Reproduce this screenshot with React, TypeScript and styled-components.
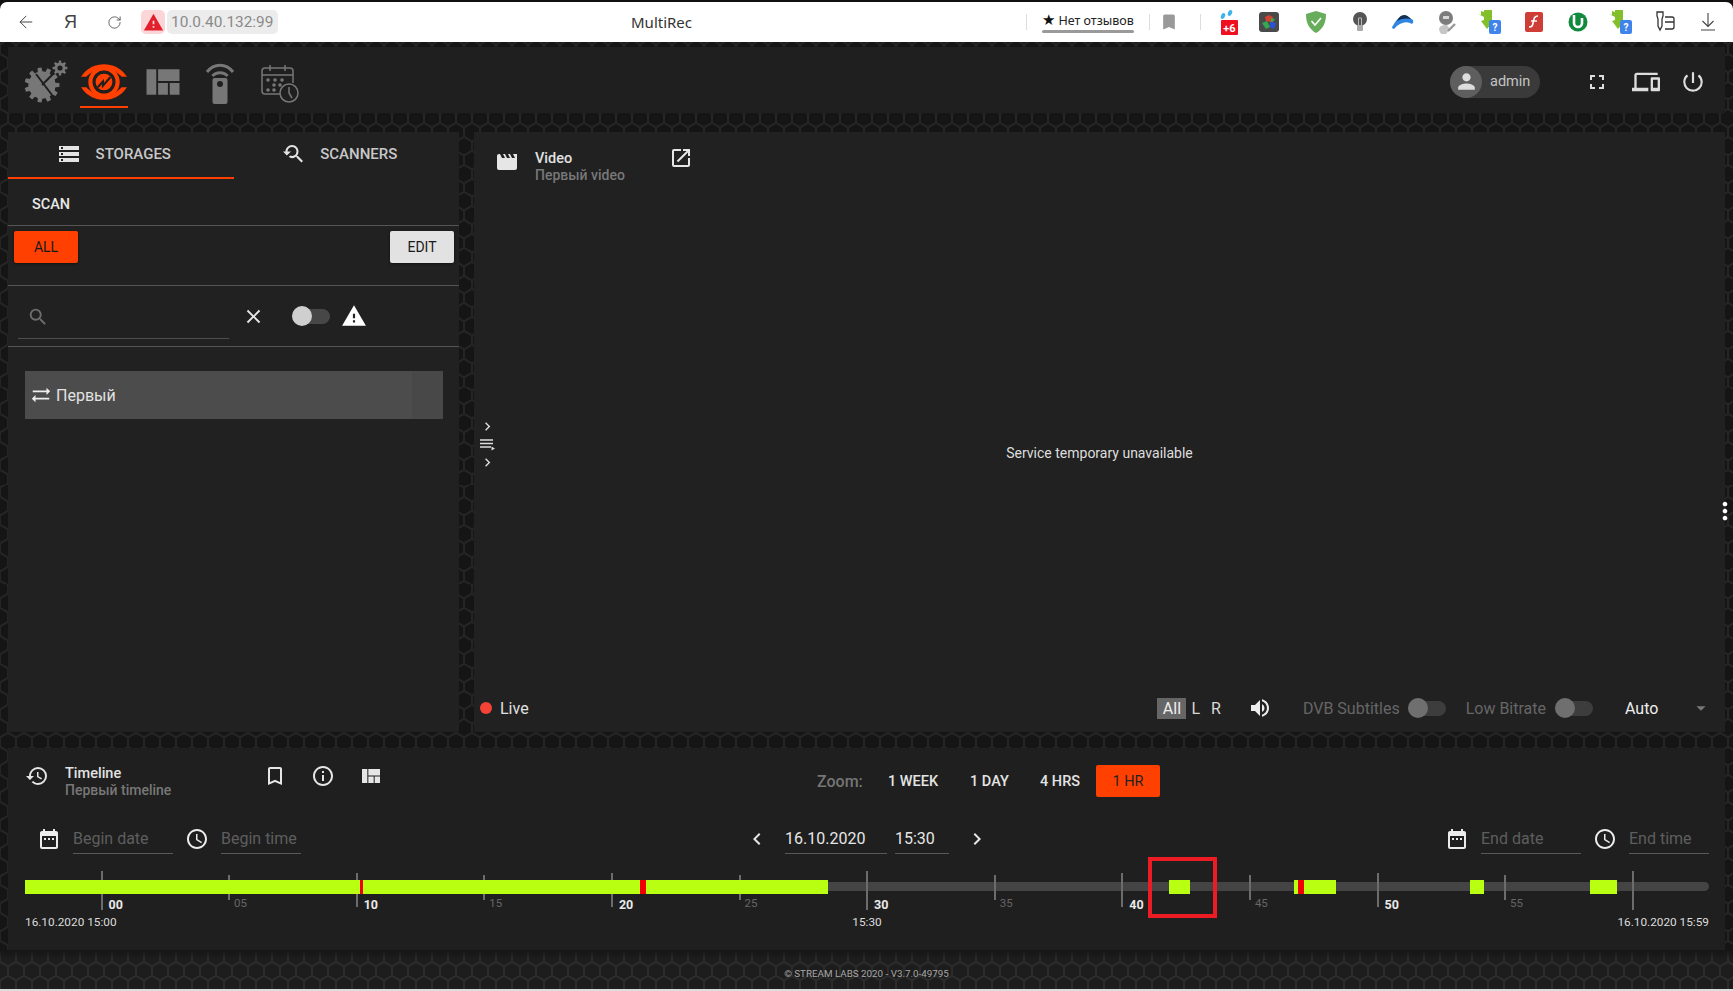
import React from 'react';
import styled, { createGlobalStyle } from 'styled-components';
import { ArrowLeft, RotateCw } from 'lucide-react';
import {
  MdAccessTime,
  MdArrowDropDown,
  MdBookmark,
  MdBookmarkBorder,
  MdChevronLeft,
  MdChevronRight,
  MdClose,
  MdDateRange,
  MdDevices,
  MdFullscreen,
  MdHistory,
  MdInfoOutline,
  MdMoreVert,
  MdMovie,
  MdOpenInNew,
  MdPerson,
  MdPowerSettingsNew,
  MdSearch,
  MdStorage,
  MdSyncAlt,
  MdViewQuilt,
  MdVolumeUp,
  MdWarning,
  MdYoutubeSearchedFor,
} from 'react-icons/md';

const ORANGE = '#ff4000';
const LIME = '#b8ff12';

const hexPoints = (cx: number, cy: number, r: number) =>
  [0, 1, 2, 3, 4, 5]
    .map((i) => {
      const a = (Math.PI / 3) * i + Math.PI / 6;
      return `${(cx + r * Math.cos(a)).toFixed(2)},${(cy + r * Math.sin(a)).toFixed(2)}`;
    })
    .join(' ');

const hexTile = (line: string, fill: string) => {
  const cells = [
    [8, 7],
    [0, 20.86],
    [16, 20.86],
    [8, 34.72],
    [0, -6.86],
    [16, -6.86],
  ]
    .map(([x, y]) => `<polygon points="${hexPoints(x, y, 8.1)}" fill="${fill}"/>`)
    .join('');
  const svg = `<svg xmlns="http://www.w3.org/2000/svg" width="16" height="27.72"><rect width="16" height="27.72" fill="${line}"/>${cells}</svg>`;
  return `url("data:image/svg+xml,${encodeURIComponent(svg)}")`;
};

const gearPath = (cx: number, cy: number, r: number, teeth: number, depth: number) => {
  const pts: string[] = [];
  for (let i = 0; i < teeth; i++) {
    const step = (Math.PI * 2) / teeth;
    const a = i * step;
    const corners: [number, number][] = [
      [a - step * 0.3, r - depth],
      [a - step * 0.2, r],
      [a + step * 0.2, r],
      [a + step * 0.3, r - depth],
    ];
    corners.forEach(([t, rad]) => {
      pts.push(`${(cx + rad * Math.cos(t)).toFixed(2)} ${(cy + rad * Math.sin(t)).toFixed(2)}`);
    });
  }
  return `M${pts.join('L')}Z`;
};

const GlobalStyle = createGlobalStyle`
  html, body {
    margin: 0;
    padding: 0;
    height: 100%;
    background: #1a1a1a;
    overflow: hidden;
  }
  body {
    font-family: Roboto, "Noto Sans", "Liberation Sans", sans-serif;
  }
  * {
    box-sizing: border-box;
  }
`;

const Window = styled.div`
  width: 1733px;
  height: 991px;
  display: flex;
  flex-direction: column;
  background: #111;
`;

/* browser chrome */
const BrowserBar = styled.div`
  height: 40px;
  margin-top: 2px;
  flex: none;
  display: flex;
  align-items: center;
  background: #fff;
  border-radius: 7px 7px 0 0;
  color: #333;
`;

const NavGroup = styled.div`
  width: 631px;
  flex: none;
  display: flex;
  align-items: center;
  padding-left: 16px;
`;

const NavButton = styled.div<{ $w: number }>`
  width: ${(p) => p.$w}px;
  display: flex;
  align-items: center;
  font-family: 'Liberation Sans', sans-serif;
  font-size: 18px;
  color: #444;
`;

const WarnBadge = styled.div`
  width: 24px;
  height: 24px;
  display: flex;
  align-items: center;
  justify-content: center;
  border-radius: 5px;
  background: #fcd5d8;
  color: #e2202c;
  font-size: 21px;
`;

const UrlChip = styled.div`
  height: 24px;
  margin-left: 2px;
  padding: 0 5px 0 4px;
  display: flex;
  align-items: center;
  border-radius: 5px;
  background: #ececec;
  color: #8a8a8a;
  font-size: 15.4px;
`;

const PageTitle = styled.div`
  font-family: 'Noto Sans', Roboto, sans-serif;
  font-size: 15px;
  color: #333;
`;

const BrowserRight = styled.div`
  margin-left: auto;
  width: 707px;
  flex: none;
  display: flex;
  align-items: center;
`;

const Separator = styled.div`
  width: 1px;
  height: 16px;
  background: #ddd;
`;

const Rating = styled.div`
  width: 92px;
  margin: 0 15px;
  display: flex;
  flex-direction: column;
  align-items: center;
  font-family: 'Noto Sans', Roboto, sans-serif;
  font-size: 12.5px;
  line-height: 16px;
  color: #222;
  white-space: nowrap;

  &::after {
    content: '';
    width: 100%;
    height: 3px;
    margin-top: 1px;
    border-radius: 2px;
    background: #9a9a9a;
  }
`;

const RatingStar = styled.span`
  font-size: 15px;
  color: #111;
`;

const BookmarkSlot = styled.div`
  width: 50px;
  padding-right: 12px;
  display: flex;
  justify-content: center;
  color: #999;
  font-size: 20px;
`;

const ExtensionRow = styled.div`
  display: flex;
  align-items: center;
  margin-left: 6px;
`;

const ExtensionCell = styled.div`
  width: 43.6px;
  height: 28px;
  display: flex;
  align-items: center;
  justify-content: center;

  &:nth-child(2) {
    margin: 0 3px 0 -3px;
  }
`;

/* page */
const Page = styled.div<{ $tile: string }>`
  flex: 1;
  display: flex;
  flex-direction: column;
  padding: 5px 8px 0;
  background-image: ${(p) => p.$tile};
  background-color: #161616;
`;

const HeaderBar = styled.header`
  height: 66px;
  flex: none;
  display: flex;
  align-items: center;
  padding: 3px 19px 0 16px;
  background: #1f1f1f;
`;

const AppIcon = styled.div<{ $w: number; $pt: number; $pl?: number; $pr?: number; $active?: boolean }>`
  width: ${(p) => p.$w}px;
  height: 60px;
  margin-top: -2px;
  padding: ${(p) => p.$pt}px ${(p) => p.$pr ?? 0}px 0 ${(p) => p.$pl ?? 0}px;
  align-self: flex-start;
  display: flex;
  align-items: flex-start;
  justify-content: center;
  border-bottom: 2px solid ${(p) => (p.$active ? ORANGE : 'transparent')};
`;

const UserChip = styled.div`
  margin-left: auto;
  width: 90px;
  height: 32px;
  display: flex;
  align-items: center;
  border-radius: 16px;
  background: #3a3a3a;
  color: #c4c4c4;
  font-size: 14.5px;
`;

const UserAvatar = styled.div`
  width: 32px;
  height: 32px;
  margin-right: 8px;
  display: flex;
  align-items: center;
  justify-content: center;
  border-radius: 50%;
  background: #5e5e5e;
  color: #ddd;
  font-size: 25px;
`;

const HeaderAction = styled.div<{ $ml: number; $size: number }>`
  margin-left: ${(p) => p.$ml}px;
  display: flex;
  color: #ddd;
  font-size: ${(p) => p.$size}px;
`;

const Main = styled.main`
  height: 600px;
  margin-top: 19px;
  flex: none;
  display: flex;
  gap: 15px;
`;

const Panel = styled.section`
  background: #212121;
`;

const SidePanel = styled(Panel)`
  width: 451px;
  flex: none;
  display: flex;
  flex-direction: column;
`;

const Tabs = styled.div`
  display: flex;
`;

const Tab = styled.div<{ $active?: boolean }>`
  width: 226px;
  height: 47px;
  display: flex;
  align-items: flex-start;
  justify-content: center;
  gap: 15px;
  padding: 13px 14px 0 0;
  border-bottom: 2px solid ${(p) => (p.$active ? ORANGE : 'transparent')};
  color: #c8c8c8;
  font-size: 15px;
  font-weight: 500;

  svg {
    font-size: 24px;
    color: #e4e4e4;
    margin-top: -3px;
  }
`;

const ScanRow = styled.div`
  height: 47px;
  display: flex;
  align-items: center;
  padding: 4px 0 0 24px;
  border-bottom: 1px solid #555;
  color: #e8e8e8;
  font-size: 14.5px;
  font-weight: 500;
`;

const ActionRow = styled.div`
  height: 60px;
  display: flex;
  align-items: flex-start;
  justify-content: space-between;
  padding: 5px 5px 0 6px;
  border-bottom: 1px solid #555;
`;

const SquareButton = styled.button<{ $primary?: boolean }>`
  height: 32px;
  width: 64px;
  border: 0;
  padding: 0;
  border-radius: 2px;
  font-family: inherit;
  font-size: 14px;
  font-weight: 400;
  color: #1a1a1a;
  background: ${(p) => (p.$primary ? ORANGE : '#e2e2e2')};
  box-shadow: 0 1px 3px rgba(0, 0, 0, 0.5);
`;

const FilterRow = styled.div`
  height: 61px;
  display: flex;
  align-items: center;
  border-bottom: 1px solid #555;
`;

const SearchField = styled.div`
  width: 211px;
  height: 38px;
  margin: 7px 0 0 10px;
  padding: 0 0 5px 9px;
  display: flex;
  align-items: center;
  border-bottom: 1px solid #4e4e4e;
  color: #6e6e6e;
  font-size: 22px;
`;

const ClearIcon = styled.div`
  width: 24px;
  margin-left: 12px;
  display: flex;
  justify-content: center;
  color: #e6e6e6;
  font-size: 23px;
`;

const Toggle = styled.div<{ $light?: boolean }>`
  width: 38px;
  height: 15px;
  position: relative;
  flex: none;
  border-radius: 8px;
  background: ${(p) => (p.$light ? '#474747' : '#3d3d3d')};

  &::before {
    content: '';
    position: absolute;
    left: 0;
    top: -3px;
    width: 20px;
    height: 20px;
    border-radius: 50%;
    background: ${(p) => (p.$light ? '#cfcfcf' : '#6f6f6f')};
  }
`;

const FilterToggle = styled.div`
  margin-left: 27px;
`;

const AlertIcon = styled.div`
  margin-left: 11px;
  display: flex;
  color: #fff;
  font-size: 26px;
`;

const ListArea = styled.div`
  padding: 24px 16px 0 17px;
`;

const ListRow = styled.div`
  height: 48px;
  display: flex;
  align-items: center;
  gap: 4px;
  padding-left: 5px;
  background: linear-gradient(90deg, #4c4c4c 92.5%, #484848 92.5%);
  color: #e2e2e2;
  font-size: 16px;

  svg {
    font-size: 22px;
    color: #eee;
  }
`;

const VideoPanel = styled(Panel)`
  flex: 1;
  position: relative;
  display: flex;
  flex-direction: column;
`;

const VideoHead = styled.div`
  height: 58px;
  flex: none;
  display: flex;
  align-items: flex-start;
  padding: 18px 0 0 21px;
`;

const HeadIcon = styled.div`
  display: flex;
  color: #e6e6e6;
  font-size: 24px;
`;

const OpenIcon = styled(HeadIcon)`
  margin: -4px 0 0 -2px;
`;

const TitleBlock = styled.div<{ $w: number }>`
  width: ${(p) => p.$w}px;
  margin-left: 16px;
`;

const BlockTitle = styled.div`
  color: #e2e2e2;
  font-size: 14.5px;
  font-weight: 500;
  line-height: 17px;
`;

const BlockSub = styled.div`
  color: #787878;
  font-size: 14px;
  font-weight: 500;
  line-height: 17px;
`;

const VideoBody = styled.div`
  flex: 1;
  display: flex;
  align-items: center;
  justify-content: center;
  padding-top: 19px;
  color: #dedede;
  font-size: 14px;
`;

const SideTools = styled.div`
  position: absolute;
  left: 4px;
  top: 286px;
  width: 18px;
  display: flex;
  flex-direction: column;
  align-items: center;
  gap: 3.5px;
  color: #ddd;
  font-size: 17px;
`;

const MoreDots = styled.div`
  position: absolute;
  right: -14px;
  top: 365px;
  display: flex;
  color: #fff;
  font-size: 28px;
`;

const PlayerBar = styled.div`
  height: 22px;
  margin-bottom: 13px;
  flex: none;
  display: flex;
  align-items: center;
  padding: 0 19px 0 6px;
  color: #e0e0e0;
  font-size: 16px;
`;

const LiveDot = styled.span`
  width: 12px;
  height: 12px;
  margin-right: 8px;
  border-radius: 50%;
  background: #f44336;
`;

const ChannelAll = styled.div`
  margin-left: auto;
  width: 29px;
  height: 21px;
  display: flex;
  align-items: center;
  justify-content: center;
  background: #666;
  color: #eee;
`;

const Channel = styled.div<{ $ml: number }>`
  margin-left: ${(p) => p.$ml}px;
  color: #d8d8d8;
`;

const Speaker = styled.div`
  margin-left: 27px;
  display: flex;
  color: #eee;
  font-size: 24px;
`;

const PlayerLabel = styled.div<{ $ml: number; $mr: number }>`
  margin: 0 ${(p) => p.$mr}px 0 ${(p) => p.$ml}px;
  color: #666;
  white-space: nowrap;
`;

const Quality = styled.div`
  width: 81px;
  margin-left: 32px;
  display: flex;
  align-items: center;
  justify-content: space-between;
  color: #eee;

  svg {
    font-size: 22px;
    color: #777;
    margin-right: -6px;
  }
`;

/* timeline */
const TimelinePanel = styled.section`
  height: 202px;
  margin-top: 16px;
  flex: none;
  padding: 17px 16px 0 17px;
  background: #1f1f1f;
`;

const TimelineHead = styled.div`
  height: 32px;
  display: flex;
  align-items: flex-start;
`;

const TimelineIcons = styled.div`
  display: flex;
  align-items: center;
  height: 22px;
  color: #e6e6e6;
  font-size: 24px;

  svg:nth-child(1) {
    margin-right: 24px;
  }
  svg:nth-child(2) {
    margin-right: 24px;
  }
`;

const HistoryIcon = styled(HeadIcon)`
  margin-top: -1px;
  width: 24px;
`;

const ZoomGroup = styled.div`
  margin-left: 434px;
  height: 32px;
  display: flex;
  align-items: center;
`;

const ZoomLabel = styled.div`
  width: 71px;
  color: #757575;
  font-size: 16px;
  font-weight: 500;
`;

const ZoomOption = styled.div<{ $w: number }>`
  width: ${(p) => p.$w}px;
  color: #e4e4e4;
  font-size: 14.5px;
  font-weight: 500;
`;

const ZoomActive = styled.div`
  width: 64px;
  height: 32px;
  display: flex;
  align-items: center;
  justify-content: center;
  border-radius: 2px;
  background: ${ORANGE};
  color: #222;
  font-size: 14.5px;
`;

const DateRow = styled.div`
  height: 30px;
  margin-top: 27px;
  display: grid;
  grid-template-columns: 1fr auto 1fr;
`;

const DateGroup = styled.div<{ $end?: boolean; $inset?: boolean }>`
  display: flex;
  align-items: flex-start;
  justify-content: ${(p) => (p.$end ? 'flex-end' : 'flex-start')};
  padding-left: ${(p) => (p.$inset ? 12 : 0)}px;
`;

const FieldIcon = styled.div<{ $ml?: number }>`
  width: 24px;
  height: 30px;
  margin-left: ${(p) => p.$ml ?? 0}px;
  display: flex;
  align-items: center;
  justify-content: center;
  color: #ececec;
  font-size: 24px;
`;

const DateField = styled.div<{ $w: number; $ml: number; $filled?: boolean }>`
  width: ${(p) => p.$w}px;
  height: 30px;
  margin-left: ${(p) => p.$ml}px;
  display: flex;
  align-items: center;
  border-bottom: 1px solid #585858;
  color: ${(p) => (p.$filled ? '#e6e6e6' : '#5e5e5e')};
  font-size: 16px;
`;

const Stepper = styled.div<{ $ml?: number }>`
  width: 24px;
  height: 30px;
  margin-left: ${(p) => p.$ml ?? 0}px;
  display: flex;
  align-items: center;
  justify-content: center;
  color: #e6e6e6;
  font-size: 24px;
`;

const TrackArea = styled.div`
  height: 75px;
  margin-top: 3px;
  position: relative;
`;

const Track = styled.div`
  position: absolute;
  left: 0;
  right: 0;
  top: 25px;
  height: 9px;
  border-radius: 0 5px 5px 0;
  background: #444;
`;

const Segment = styled.div`
  position: absolute;
  top: 23px;
  height: 14px;
  background: ${LIME};
`;

const Mark = styled(Segment)`
  background: #f00000;
`;

const Tick = styled.div<{ $kind: 'long' | 'mid' | 'short' }>`
  position: absolute;
  width: 2px;
  margin-left: -1px;
  top: ${(p) => (p.$kind === 'long' ? 14 : p.$kind === 'mid' ? 16 : 18)}px;
  height: ${(p) => (p.$kind === 'long' ? 39 : p.$kind === 'mid' ? 34 : 25)}px;
  background: #6c6c6c;
`;

const TickLabel = styled.div<{ $major?: boolean }>`
  position: absolute;
  top: ${(p) => (p.$major ? 41 : 39)}px;
  line-height: 14px;
  color: ${(p) => (p.$major ? '#eaeaea' : '#666')};
  font-size: ${(p) => (p.$major ? 12.5 : 11.5)}px;
  font-weight: ${(p) => (p.$major ? 700 : 400)};
`;

const EdgeLabels = styled.div`
  position: absolute;
  left: 0;
  right: 0;
  top: 58px;
  display: grid;
  grid-template-columns: 1fr auto 1fr;
  color: #dcdcdc;
  font-size: 11.8px;
  line-height: 14px;

  div:last-child {
    text-align: right;
  }
`;

const Annotation = styled.div`
  position: absolute;
  left: 1123px;
  top: 0;
  width: 69px;
  height: 61px;
  border: 4.5px solid #ed1c24;
`;

const Footer = styled.footer<{ $tile: string }>`
  flex: none;
  height: 39px;
  margin: 0 -8px;
  padding-top: 8px;
  display: flex;
  align-items: center;
  justify-content: center;
  background-image: linear-gradient(#141414 0, rgba(20, 20, 20, 0) 9px), ${(p) => p.$tile};
  color: #a8a8a8;
  font-size: 9.8px;
`;

const BottomEdge = styled.div`
  height: 2px;
  flex: none;
  background: #dcdcdc;
`;

const GearLogo = () => (
  <svg width="46" height="46" viewBox="0 0 46 46">
    <path d={gearPath(18, 27, 17.5, 11, 4)} fill="#777" />
    <circle cx="18" cy="27" r="13.5" fill="#777" />
    <path d="M12 16 L28 37 M18 27 L30 15" stroke="#1f1f1f" strokeWidth="2" fill="none" />
    <path d={gearPath(36, 10, 7.5, 8, 2)} fill="#777" />
    <circle cx="36" cy="10" r="2.6" fill="#1f1f1f" />
  </svg>
);

const EyeLogo = () => (
  <svg width="46" height="36" viewBox="0 0 44 34">
    <g fill={ORANGE}>
      <path d="M0 12 C6 3 14 0 22 0 C30 0 38 3 44 12 L39 12 C35 8 29 4 22 4 C15 4 9 8 5 12 Z" />
      <path d="M0 22 C6 31 14 34 22 34 C30 34 38 31 44 22 L39 22 C35 26 29 30 22 30 C15 30 9 26 5 22 Z" />
      <circle cx="22" cy="17" r="15" />
    </g>
    <circle cx="22" cy="17" r="11" fill="#1f1f1f" />
    <circle cx="22" cy="17" r="8" fill={ORANGE} />
    <path d="M16 22 L21 16.500 L21 20.500 L28 12.500" stroke="#1f1f1f" strokeWidth="2" fill="none" />
  </svg>
);

const RemoteLogo = () => (
  <svg width="30" height="44" viewBox="0 0 30 44">
    <path d="M2 12 C9 3 21 3 28 12" stroke="#777" strokeWidth="3" fill="none" />
    <path d="M7.5 16 C11 11.5 19 11.5 22.5 16" stroke="#777" strokeWidth="3" fill="none" />
    <rect x="7.5" y="18" width="15" height="26" rx="2" fill="#777" />
    <circle cx="15" cy="24" r="3" fill="#1f1f1f" />
  </svg>
);

const CalendarLogo = () => (
  <svg width="38" height="40" viewBox="0 0 38 40" fill="none" stroke="#777" strokeWidth="1.5">
    <path d="M27 30 H4 a3 3 0 0 1 -3 -3 V7 a3 3 0 0 1 3 -3 H29 a3 3 0 0 1 3 3 V19" />
    <path d="M1 11 H32 M9 1 V7 M24 1 V7" />
    <g fill="#777" stroke="none">
      <circle cx="7" cy="16" r="1.8" />
      <circle cx="14" cy="16" r="1.8" />
      <circle cx="21" cy="16" r="1.8" />
      <circle cx="13" cy="21" r="1.8" />
      <circle cx="19" cy="21" r="1.8" />
      <circle cx="7" cy="26" r="1.8" />
      <circle cx="13" cy="26" r="1.8" />
    </g>
    <circle cx="28" cy="29" r="9" fill="#1f1f1f" />
    <path d="M28 23 V29 L31 34" />
  </svg>
);

const PlaylistGlyph = () => (
  <svg width="16" height="12" viewBox="0 0 16 12">
    <path d="M1 1 H14 M1 4.500 H14 M1 8 H12" stroke="currentColor" strokeWidth="1.400" />
    <path d="M12.500 7.500 L16 9.500 L12.500 11.500Z" fill="currentColor" />
  </svg>
);

const Extension = ({ kind }: { kind: number }) => {
  switch (kind) {
    case 0:
      return (
        <svg width="20" height="26" viewBox="0 0 20 26">
          <ellipse cx="4" cy="7" rx="2" ry="3" fill="#3ab4ea" transform="rotate(25 4 7)" />
          <ellipse cx="11" cy="4" rx="2" ry="3" fill="#3ab4ea" transform="rotate(25 11 4)" />
          <rect x="2" y="11" width="17" height="15" rx="1" fill="#ef0f1e" />
          <text x="10.5" y="23" textAnchor="middle" fill="#fff" fontSize="11" fontWeight="700" fontFamily="Roboto">+6</text>
        </svg>
      );
    case 1:
      return (
        <svg width="20" height="20" viewBox="0 0 20 20">
          <rect width="20" height="20" rx="3" fill="#4a4a4a" />
          <path d="M10 3 L14 5 L12 10 L7 9 L6 5Z" fill="#d8412f" />
          <path d="M3 11 L8 9 L11 15 L7 17Z" fill="#35a853" />
          <path d="M11 10 L17 11 L15 17 L11 15Z" fill="#2a52d8" />
          <path d="M12 6 L16 7 L14 10 L12 10Z" fill="#3aa84c" />
        </svg>
      );
    case 2:
      return (
        <svg width="20" height="22" viewBox="0 0 20 22">
          <path d="M10 0 L20 3 C20 12 17 18 10 22 C3 18 0 12 0 3Z" fill="#67ad5b" />
          <path d="M5.5 10 L9 14 L15 7" stroke="#fff" strokeWidth="1.6" fill="none" />
        </svg>
      );
    case 3:
      return (
        <svg width="14" height="20" viewBox="0 0 14 20">
          <circle cx="7" cy="7" r="7" fill="#555" />
          <rect x="4" y="13" width="6" height="6" rx="1" fill="#aaa" />
          <path d="M5.500 13 V6 H8.500 V13" stroke="#bbb" strokeWidth="1" fill="none" />
        </svg>
      );
    case 4:
      return (
        <svg width="22" height="14" viewBox="0 0 22 14">
          <path d="M0 12 C3 8 6 1 11 1 C15 1 18 3 21 5 C22 8 20 10 18 8 C13 6 7 8 2 14 C1 14 0 13 0 12Z" fill="#2f85e0" />
          <path d="M5 6 C7 2 9 0 12 0 C15 0 17 2 19 4 C15 3 10 3 5 6Z" fill="#17304f" />
        </svg>
      );
    case 5:
      return (
        <svg width="20" height="24" viewBox="0 0 20 24">
          <circle cx="9" cy="8" r="7" fill="#7d7d7d" />
          <rect x="6" y="6" width="6" height="3" fill="#d8d8d8" />
          <path d="M2 20 C2 15 7 15 10 15 L13 19 L9 24 L4 24Z" fill="#c6c6c6" />
          <path d="M11 21 L18 14" stroke="#9a9a9a" strokeWidth="2.400" />
        </svg>
      );
    case 6:
    case 9:
      return (
        <svg width="24" height="24" viewBox="0 0 24 24">
          <path d="M0 4 L3 5 L3 1 L6 2 L6 0 L14 0 L14 10 L17 10 L9 19 L3 11 L6 10 L6 7Z" fill="#82bf2a" />
          <rect x="11" y="10" width="12" height="14" rx="2" fill="#3f84ea" />
          <text x="17" y="21" textAnchor="middle" fill="#fff" fontSize="10" fontWeight="700" fontFamily="Roboto">?</text>
        </svg>
      );
    case 7:
      return (
        <svg width="18" height="20" viewBox="0 0 18 20">
          <rect width="18" height="20" rx="2" fill="#cf3d37" />
          <path d="M13 4 C9 4 9 7 8 11 C7.500 14 7 15 4 15" stroke="#fff" strokeWidth="1.6" fill="none" />
          <path d="M6 9 H12" stroke="#fff" strokeWidth="1.4" />
        </svg>
      );
    case 8:
      return (
        <svg width="20" height="20" viewBox="0 0 20 20">
          <circle cx="10" cy="10" r="9.500" fill="#108a3c" />
          <path d="M6 3 V11 a4 4 0 0 0 8 0 V6" stroke="#fff" strokeWidth="2.600" fill="none" />
        </svg>
      );
    default:
      return (
        <svg width="20" height="22" viewBox="0 0 20 22" fill="none" stroke="#333" strokeWidth="1.3">
          <path d="M2 1 H8 V5 L7 8 V15 L5 19 L3 15 V8 L2 5Z" />
          <path d="M10 6 H17 a2 2 0 0 1 2 2 V16 a2 2 0 0 1 -2 2 H10 M10 11 H19" />
        </svg>
      );
  }
};

const DownloadIcon = () => (
  <svg width="14" height="18" viewBox="0 0 14 18" fill="none" stroke="#444" strokeWidth="1.1">
    <path d="M7 0 V13 M1.500 8 L7 13.500 L12.500 8 M0 17 H14" />
  </svg>
);

const TICKS = Array.from({ length: 12 }, (_, i) => i * 5);
const TICK_START = 76.5;
const TICK_STEP = 127.6;

const SEGMENTS = [
  { from: 0, to: 803 },
  { from: 1144, to: 1165 },
  { from: 1269, to: 1311 },
  { from: 1445, to: 1459 },
  { from: 1565, to: 1592 },
];
const MARKS = [
  { from: 335, to: 338 },
  { from: 615, to: 621 },
  { from: 1273, to: 1279 },
];

function Timeline() {
  return (
    <TrackArea>
      <Track />
      {TICKS.map((t, i) => {
        const x = TICK_START + i * TICK_STEP;
        const major = t % 10 === 0;
        const kind = t === 0 || t === 30 ? 'long' : major ? 'mid' : 'short';
        return (
          <React.Fragment key={t}>
            <Tick $kind={kind} style={{ left: x }} />
            <TickLabel $major={major} style={{ left: x + (major ? 7 : 5) }}>
              {String(t).padStart(2, '0')}
            </TickLabel>
          </React.Fragment>
        );
      })}
      <Tick $kind="long" style={{ left: TICK_START + 12 * TICK_STEP }} />
      {SEGMENTS.map((s) => (
        <Segment key={s.from} style={{ left: s.from, width: s.to - s.from }} />
      ))}
      {MARKS.map((m) => (
        <Mark key={m.from} style={{ left: m.from, width: m.to - m.from }} />
      ))}
      <EdgeLabels>
        <div>16.10.2020 15:00</div>
        <div>15:30</div>
        <div>16.10.2020 15:59</div>
      </EdgeLabels>
      <Annotation />
    </TrackArea>
  );
}

export default function App() {
  const pageTile = hexTile('#252525', '#151515');
  const footerTile = hexTile('#2c2c2c', '#1d1d1d');

  return (
    <Window>
      <GlobalStyle />
      <BrowserBar>
        <NavGroup>
          <NavButton $w={48}>
            <ArrowLeft size={20} strokeWidth={1.2} />
          </NavButton>
          <NavButton $w={43}>Я</NavButton>
          <NavButton $w={34}>
            <RotateCw size={15} strokeWidth={1.3} />
          </NavButton>
          <WarnBadge>
            <MdWarning />
          </WarnBadge>
          <UrlChip>10.0.40.132:99</UrlChip>
        </NavGroup>
        <PageTitle>MultiRec</PageTitle>
        <BrowserRight>
          <Separator />
          <Rating>
            <span>
              <RatingStar>★</RatingStar> Нет отзывов
            </span>
          </Rating>
          <Separator />
          <BookmarkSlot>
            <MdBookmark />
          </BookmarkSlot>
          <Separator />
          <ExtensionRow>
            {Array.from({ length: 11 }, (_, i) => (
              <ExtensionCell key={i}>
                <Extension kind={i} />
              </ExtensionCell>
            ))}
            <ExtensionCell>
              <DownloadIcon />
            </ExtensionCell>
          </ExtensionRow>
        </BrowserRight>
      </BrowserBar>

      <Page $tile={pageTile}>
        <HeaderBar>
          <AppIcon $w={56} $pt={10} $pr={10}>
            <GearLogo />
          </AppIcon>
          <AppIcon $w={48} $pt={16} $active>
            <EyeLogo />
          </AppIcon>
          <AppIcon $w={66} $pt={12} $pl={3}>
            <MdViewQuilt size={44} color="#777" />
          </AppIcon>
          <AppIcon $w={52} $pt={12}>
            <RemoteLogo />
          </AppIcon>
          <AppIcon $w={68} $pt={16}>
            <CalendarLogo />
          </AppIcon>
          <UserChip>
            <UserAvatar>
              <MdPerson />
            </UserAvatar>
            admin
          </UserChip>
          <HeaderAction $ml={45} $size={24}>
            <MdFullscreen />
          </HeaderAction>
          <HeaderAction $ml={23} $size={28}>
            <MdDevices />
          </HeaderAction>
          <HeaderAction $ml={20} $size={26}>
            <MdPowerSettingsNew />
          </HeaderAction>
        </HeaderBar>

        <Main>
          <SidePanel>
            <Tabs>
              <Tab $active>
                <MdStorage />
                STORAGES
              </Tab>
              <Tab>
                <MdYoutubeSearchedFor />
                SCANNERS
              </Tab>
            </Tabs>
            <ScanRow>SCAN</ScanRow>
            <ActionRow>
              <SquareButton $primary>ALL</SquareButton>
              <SquareButton>EDIT</SquareButton>
            </ActionRow>
            <FilterRow>
              <SearchField>
                <MdSearch />
              </SearchField>
              <ClearIcon>
                <MdClose />
              </ClearIcon>
              <FilterToggle>
                <Toggle $light />
              </FilterToggle>
              <AlertIcon>
                <MdWarning />
              </AlertIcon>
            </FilterRow>
            <ListArea>
              <ListRow>
                <MdSyncAlt />
                Первый
              </ListRow>
            </ListArea>
          </SidePanel>

          <VideoPanel>
            <VideoHead>
              <HeadIcon>
                <MdMovie />
              </HeadIcon>
              <TitleBlock $w={136}>
                <BlockTitle>Video</BlockTitle>
                <BlockSub>Первый video</BlockSub>
              </TitleBlock>
              <OpenIcon>
                <MdOpenInNew />
              </OpenIcon>
            </VideoHead>
            <VideoBody>Service temporary unavailable</VideoBody>
            <SideTools>
              <MdChevronRight />
              <PlaylistGlyph />
              <MdChevronRight />
            </SideTools>
            <MoreDots>
              <MdMoreVert />
            </MoreDots>
            <PlayerBar>
              <LiveDot />
              Live
              <ChannelAll>All</ChannelAll>
              <Channel $ml={5}>L</Channel>
              <Channel $ml={11}>R</Channel>
              <Speaker>
                <MdVolumeUp />
              </Speaker>
              <PlayerLabel $ml={31} $mr={8}>DVB Subtitles</PlayerLabel>
              <Toggle />
              <PlayerLabel $ml={20} $mr={9}>Low Bitrate</PlayerLabel>
              <Toggle />
              <Quality>
                Auto
                <MdArrowDropDown />
              </Quality>
            </PlayerBar>
          </VideoPanel>
        </Main>

        <TimelinePanel>
          <TimelineHead>
            <HistoryIcon>
              <MdHistory />
            </HistoryIcon>
            <TitleBlock $w={198}>
              <BlockTitle>Timeline</BlockTitle>
              <BlockSub>Первый timeline</BlockSub>
            </TitleBlock>
            <TimelineIcons>
              <MdBookmarkBorder />
              <MdInfoOutline />
              <MdViewQuilt />
            </TimelineIcons>
            <ZoomGroup>
              <ZoomLabel>Zoom:</ZoomLabel>
              <ZoomOption $w={82}>1 WEEK</ZoomOption>
              <ZoomOption $w={70}>1 DAY</ZoomOption>
              <ZoomOption $w={56}>4 HRS</ZoomOption>
              <ZoomActive>1 HR</ZoomActive>
            </ZoomGroup>
          </TimelineHead>
          <DateRow>
            <DateGroup $inset>
              <FieldIcon>
                <MdDateRange />
              </FieldIcon>
              <DateField $w={100} $ml={12}>Begin date</DateField>
              <FieldIcon $ml={12}>
                <MdAccessTime />
              </FieldIcon>
              <DateField $w={80} $ml={12}>Begin time</DateField>
            </DateGroup>
            <DateGroup>
              <Stepper>
                <MdChevronLeft />
              </Stepper>
              <DateField $w={102} $ml={16} $filled>16.10.2020</DateField>
              <DateField $w={54} $ml={8} $filled>15:30</DateField>
              <Stepper $ml={16}>
                <MdChevronRight />
              </Stepper>
            </DateGroup>
            <DateGroup $end>
              <FieldIcon>
                <MdDateRange />
              </FieldIcon>
              <DateField $w={100} $ml={12}>End date</DateField>
              <FieldIcon $ml={12}>
                <MdAccessTime />
              </FieldIcon>
              <DateField $w={80} $ml={12}>End time</DateField>
            </DateGroup>
          </DateRow>
          <Timeline />
        </TimelinePanel>

        <Footer $tile={footerTile}>© STREAM LABS 2020 - V3.7.0-49795</Footer>
      </Page>
      <BottomEdge />
    </Window>
  );
}
